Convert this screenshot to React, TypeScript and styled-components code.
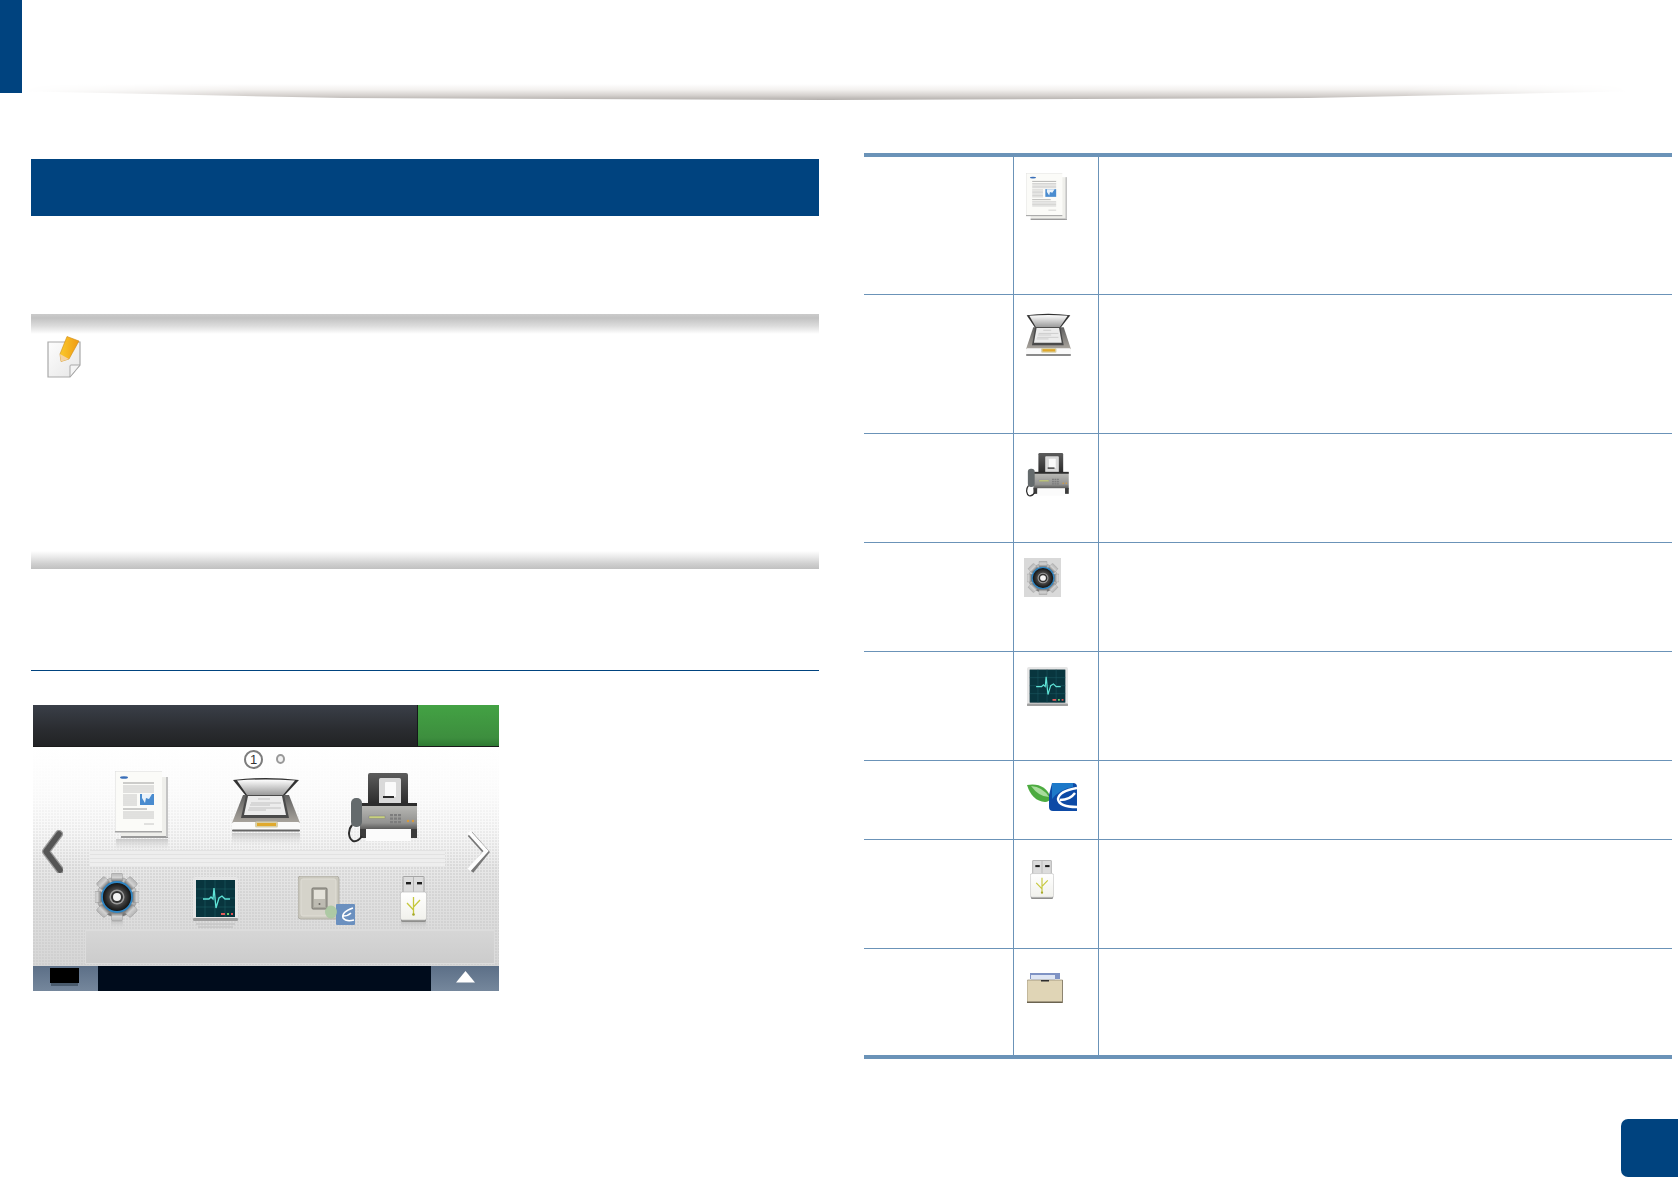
import React from "react";
import styled, { createGlobalStyle } from "styled-components";

const GlobalStyle = createGlobalStyle`
  html, body { margin: 0; padding: 0; background: #fff; }
  body { font-family: "Liberation Sans", Arial, sans-serif; overflow: hidden; }
`;

const BLUE = "#00437f";
const RULE = "#6b93b8";

const Page = styled.div`
  width: 1678px;
  height: 1178px;
  display: flex;
  flex-direction: column;
  background: #fff;
`;
const Header = styled.header`
  height: 100px;
  display: flex;
  flex: none;
`;
const HeaderTab = styled.div`
  width: 22px;
  height: 93px;
  background: ${BLUE};
`;
const HeaderShadow = styled.div`
  width: 1608px;
  height: 16px;
  margin-top: 84px;
  background: linear-gradient(to bottom, #ffffff 0%, #f3f1ef 35%, #d6d2cf 70%, #b3afac 100%);
  clip-path: polygon(0 45%, 20% 88%, 50% 100%, 80% 88%, 100% 45%, 100% 0, 0 0);
  mask-image: linear-gradient(to right, transparent 0, #000 14%, #000 86%, transparent 100%);
`;
const Main = styled.main`
  flex: 1;
  display: grid;
  grid-template-columns: 788px 808px;
  column-gap: 45px;
  align-items: start;
  padding-left: 31px;
  margin-top: 53px;
`;
const LeftColumn = styled.section`
  padding-top: 6px;
  display: flex;
  flex-direction: column;
`;
const SectionBar = styled.div`
  height: 57px;
  background: ${BLUE};
`;
const NoteBox = styled.div`
  margin-top: 98px;
  height: 255px;
  display: flex;
  flex-direction: column;
  justify-content: space-between;
`;
const NoteTop = styled.div`
  height: 20px;
  background: linear-gradient(to bottom, #cbcbcb 0%, #c2c2c2 20%, #dcdcdc 60%, #ffffff 100%);
`;
const NoteBody = styled.div`
  flex: 1;
  padding: 1px 0 0 16px;
`;
const NoteBottom = styled.div`
  height: 18px;
  background: linear-gradient(to bottom, #ffffff 0%, #ececec 30%, #d0d0d0 70%, #c0c0c0 100%);
`;
const BlueRule = styled.div`
  margin-top: 101px;
  height: 1px;
  background: ${BLUE};
`;
const Device = styled.div`
  margin: 34px 0 0 2px;
  width: 466px;
  height: 286px;
  display: flex;
  flex-direction: column;
`;
const TitleBar = styled.div`
  height: 42px;
  flex: none;
  display: flex;
  border-bottom: 1px solid #1a1a1a;
  box-sizing: border-box;
`;
const TitleDark = styled.div`
  width: 384px;
  background: linear-gradient(to bottom, #3a3f48 0%, #2a2c30 60%, #222325 100%);
  border-right: 1px solid #15181b;
`;
const TitleGreen = styled.div`
  flex: 1;
  background: linear-gradient(to bottom, #43a244 0%, #3d8e3e 80%, #2f7a33 100%);
`;
const ScreenBody = styled.div`
  position: relative;
  height: 219px;
  flex: none;
  background:
    linear-gradient(to bottom, #ffffff 0%, rgba(252, 252, 252, 0.9) 22%, rgba(250, 250, 250, 0) 55%),
    radial-gradient(circle at 1px 1px, #c8c8c8 0.5px, transparent 0.9px) 0 0 / 3px 3px,
    linear-gradient(to bottom, #ffffff 0%, #f4f4f4 35%, #e2e2e2 65%, #d6d6d6 100%);
`;
const PagerRow = styled.div`
  height: 21px;
  padding: 3px 0 0 211px;
  box-sizing: border-box;
  display: flex;
  align-items: center;
  gap: 13px;
`;
const PagerNumber = styled.div`
  width: 19px;
  height: 19px;
  box-sizing: border-box;
  border: 2px solid #7d7d7d;
  border-radius: 50%;
  background: #fff;
  color: #333;
  font-size: 13px;
  line-height: 15px;
  text-align: center;
`;
const PagerDot = styled.div`
  width: 9px;
  height: 10px;
  box-sizing: border-box;
  border: 2px solid #999;
  border-radius: 50%;
  background: #f2f2f2;
`;
const IconRow = styled.div<{ $h: number }>`
  height: ${(p) => p.$h}px;
  display: flex;
  align-items: flex-start;
`;
const IconSlot = styled.div<{ $top: number; $left: number; $soft?: boolean }>`
  flex: none;
  line-height: 0;
  margin: ${(p) => p.$top}px 0 0 ${(p) => p.$left}px;
  filter: ${(p) => (p.$soft ? "blur(0.7px)" : "blur(0.35px)")};
`;
const Stripes = styled.div`
  height: 16px;
  width: 355px;
  margin-left: 57px;
  background: repeating-linear-gradient(to bottom, #e2e2e2 0, #e2e2e2 1px, #eeeeee 1px, #eeeeee 4px);
`;
const LowerPanel = styled.div`
  height: 34px;
  margin: 0 4px 1px 52px;
  background: linear-gradient(to bottom, #d6d6d6, #cccccc);
  border: 1px solid #dcdcdc;
  box-sizing: border-box;
`;
const Arrow = styled.div<{ $side: "left" | "right" }>`
  position: absolute;
  top: 83px;
  line-height: 0;
  ${(p) => (p.$side === "left" ? "left: 7px;" : "right: 9px;")}
`;
const ScreenFooter = styled.div`
  flex: 1;
  display: flex;
`;
const FooterLeft = styled.div`
  width: 65px;
  padding: 2px 0 0 17px;
  box-sizing: border-box;
  background: linear-gradient(to bottom, #5c6f87, #75879c);
`;
const FooterSwatch = styled.div`
  width: 29px;
  height: 15px;
  background: #000;
  box-shadow: 0 4px 0 -1px #4a5b6d;
`;
const FooterMiddle = styled.div`
  flex: 1;
  background: #000c1c;
`;
const FooterRight = styled.div`
  width: 68px;
  display: flex;
  justify-content: center;
  padding-top: 5px;
  box-sizing: border-box;
  background: linear-gradient(to bottom, #5c6f87, #75879c);
`;
const Table = styled.div`
  border-top: 4px solid ${RULE};
  border-bottom: 4px solid ${RULE};
`;
const TableRow = styled.div<{ $h: number; $last?: boolean }>`
  display: grid;
  grid-template-columns: 149px 86px 1fr;
  height: ${(p) => p.$h}px;
  box-sizing: border-box;
  border-bottom: ${(p) => (p.$last ? "none" : `1px solid ${RULE}`)};
`;
const LabelCell = styled.div``;
const IconCell = styled.div`
  border-left: 1px solid ${RULE};
  border-right: 1px solid ${RULE};
`;
const DescCell = styled.div``;
const GearBox = styled.div`
  width: 37px;
  height: 39px;
  background: #d9d9d9;
  display: flex;
  align-items: center;
  justify-content: center;
`;
const PageFooter = styled.footer`
  flex: none;
  display: flex;
  justify-content: flex-end;
  margin-bottom: 1px;
`;
const PageBadge = styled.div`
  width: 57px;
  height: 58px;
  background: ${BLUE};
  border-radius: 7px 0 0 7px;
`;

type IconProps = { w: number; h: number; reflect?: boolean };

const Fade = ({ id }: { id: string }) => (
  <linearGradient id={id} x1="0" y1="0" x2="0" y2="1">
    <stop offset="0" stopColor="#bdbdbd" stopOpacity="0.75" />
    <stop offset="1" stopColor="#dcdcdc" stopOpacity="0" />
  </linearGradient>
);

const DocIcon = ({ w, h, reflect }: IconProps) => (
  <svg width={w} height={h} viewBox={`0 0 53 ${reflect ? 79 : 67}`} preserveAspectRatio="none">
    <defs>
      <Fade id="docFade" />
    </defs>
    {reflect && <rect x="1" y="68" width="52" height="11" fill="url(#docFade)" />}
    <rect x="6" y="6" width="47" height="61" fill="#efefeb" />
    <rect x="6" y="65" width="47" height="2" fill="#9a9a9a" />
    <rect x="51" y="6" width="2" height="60" fill="#c4c4c4" />
    <rect x="0" y="0" width="47" height="61" fill="#fbfbf8" />
    <path d="M0 61V0h47" fill="none" stroke="#dcdcdc" />
    <rect x="0" y="60" width="47" height="1.5" fill="#a5a5a5" />
    <ellipse cx="9" cy="6.5" rx="4" ry="1.3" fill="#3a6fb8" />
    <g stroke="#777" strokeWidth="0.7">
      <path d="M8 12h31M8 38h24" />
    </g>
    <g stroke="#c0c0c0" strokeWidth="0.9">
      <path d="M8 15h31M8 17h31M8 19h31M8 21h31" />
      <path d="M8 24h14M8 26h14M8 28h14M8 30h14M8 32h14M8 34h14" />
      <path d="M8 41h31M8 43h31M8 45h31M8 47h31" />
      <path d="M29 53h10" />
    </g>
    <rect x="25" y="23" width="14" height="11" fill="#4a8ccf" />
    <path d="M27 23h10l-3 5-3-1-1 5-3-5z" fill="#e9f2fa" />
  </svg>
);

const ScannerIcon = ({ w, h, reflect }: IconProps) => (
  <svg width={w} height={h} viewBox={`0 0 68 ${reflect ? 68 : 56}`} preserveAspectRatio="none">
    <defs>
      <Fade id="scanFade" />
      <linearGradient id="lidFill" x1="0" y1="0" x2="0" y2="1">
        <stop offset="0" stopColor="#ffffff" />
        <stop offset="1" stopColor="#9a9a9a" />
      </linearGradient>
      <linearGradient id="scanBody" x1="0" y1="0" x2="0" y2="1">
        <stop offset="0" stopColor="#5f5f5f" />
        <stop offset="1" stopColor="#aaa59e" />
      </linearGradient>
    </defs>
    {reflect && <rect x="0" y="56" width="68" height="12" fill="url(#scanFade)" />}
    <path d="M1 3Q33-1 67 3L52 19H14z" fill="#333" />
    <path d="M5 3.5Q33 1.5 63 3.5L51 18H15z" fill="url(#lidFill)" />
    <path d="M11 18H57L68 46H0z" fill="url(#scanBody)" />
    <path d="M14 18H52L57 41H9z" fill="#4a4a4a" />
    <path d="M16 19H50L54 38H12z" fill="#ececec" />
    <g stroke="#a8a8a8" strokeWidth="0.6">
      <path d="M26 22h12M19 26h30M18 28h20M17 31h32M16 33h18" />
    </g>
    <rect x="0" y="45" width="68" height="9" rx="2" fill="#fafafa" />
    <rect x="0" y="52.5" width="68" height="2" rx="1" fill="#666" />
    <rect x="23" y="44.5" width="23" height="6" rx="1.5" fill="#d8cfa8" />
    <rect x="25" y="46" width="19" height="3" fill="#e0a92c" />
  </svg>
);

const FaxIcon = ({ w, h }: IconProps) => (
  <svg width={w} height={h} viewBox="0 0 71 70" preserveAspectRatio="none">
    <defs>
      <linearGradient id="faxBack" x1="0" y1="0" x2="0" y2="1">
        <stop offset="0" stopColor="#5c5c5c" />
        <stop offset="1" stopColor="#2a2a2a" />
      </linearGradient>
      <linearGradient id="faxBody" x1="0" y1="0" x2="0" y2="1">
        <stop offset="0" stopColor="#bcbcb8" />
        <stop offset="0.7" stopColor="#929290" />
        <stop offset="1" stopColor="#4a4a4a" />
      </linearGradient>
    </defs>
    <path d="M20 2q0-2 2-2h36q2 0 2 2v30H20z" fill="url(#faxBack)" />
    <rect x="31" y="5" width="22" height="27" rx="1.5" fill="#d9d9d9" />
    <rect x="37" y="9" width="11" height="15" rx="1" fill="#fafafa" />
    <rect x="35" y="23" width="11" height="2" fill="#2b2b2b" />
    <rect x="12" y="31" width="57" height="27" rx="1" fill="url(#faxBody)" />
    <rect x="12" y="30" width="57" height="3" fill="#2d2d2d" />
    <rect x="21" y="43" width="16" height="2.5" fill="#c9d17e" stroke="#777" strokeWidth="0.4" />
    <g fill="#7d7d7d">
      <rect x="42" y="41" width="3" height="2.2" />
      <rect x="46" y="41" width="3" height="2.2" />
      <rect x="50" y="41" width="3" height="2.2" />
      <rect x="42" y="44.5" width="3" height="2.2" />
      <rect x="46" y="44.5" width="3" height="2.2" />
      <rect x="50" y="44.5" width="3" height="2.2" />
      <rect x="42" y="48" width="3" height="2.2" />
      <rect x="46" y="48" width="3" height="2.2" />
      <rect x="50" y="48" width="3" height="2.2" />
    </g>
    <circle cx="60" cy="48" r="1.2" fill="#d89a3a" />
    <circle cx="65" cy="48" r="1.2" fill="#d89a3a" />
    <rect x="18" y="56" width="45" height="12" fill="#fbfbfb" />
    <rect x="12" y="56" width="6" height="9" fill="#3c3c3c" />
    <rect x="63" y="56" width="6" height="9" fill="#3c3c3c" />
    <rect x="3" y="25" width="11" height="29" rx="5" fill="#646a6c" />
    <path d="M4 52C-1 58 1 66 5 68c4 1 7-2 9-5" fill="none" stroke="#2d2d2d" strokeWidth="2" />
  </svg>
);

const GEAR_TEETH = [0, 45, 90, 135, 180, 225, 270, 315];

const GearIcon = ({ w, h, reflect }: IconProps) => (
  <svg width={w} height={h} viewBox={`0 0 44 ${reflect ? 57 : 48}`} preserveAspectRatio="none">
    <defs>
      <linearGradient id="gearMetal" x1="0" y1="0" x2="0" y2="1">
        <stop offset="0" stopColor="#b5b5b5" />
        <stop offset="0.5" stopColor="#d2d2d2" />
        <stop offset="1" stopColor="#6a6a6a" />
      </linearGradient>
      <radialGradient id="gearCore" cx="0.5" cy="0.5" r="0.5">
        <stop offset="0.35" stopColor="#5a5a5a" />
        <stop offset="1" stopColor="#0c0c0c" />
      </radialGradient>
      <Fade id="gearFade" />
    </defs>
    {reflect && <rect x="16" y="48" width="12" height="9" fill="url(#gearFade)" />}
    <circle cx="22" cy="24" r="20" fill="url(#gearMetal)" stroke="#8a8a8a" strokeWidth="0.5" />
    <g fill="url(#gearMetal)" stroke="#8a8a8a" strokeWidth="0.4">
      {GEAR_TEETH.map((a) => (
        <rect key={a} x="16.5" y="0" width="11" height="9" rx="1.5" transform={`rotate(${a} 22 24)`} />
      ))}
    </g>
    <circle cx="22" cy="24" r="15" fill="url(#gearCore)" stroke="#2f86c4" strokeWidth="1.8" />
    <circle cx="22" cy="24" r="7.5" fill="#9a9a9a" />
    <circle cx="22" cy="24" r="6" fill="#333" />
    <circle cx="22" cy="24" r="4" fill="#f4f4f4" />
  </svg>
);

const MonitorIcon = ({ w, h, reflect }: IconProps) => (
  <svg width={w} height={h} viewBox={`0 0 45 ${reflect ? 53 : 45}`} preserveAspectRatio="none">
    {reflect && (
      <g stroke="#bbb" strokeWidth="1">
        <path d="M3 47h39M5 50h35" />
      </g>
    )}
    <rect x="0" y="0" width="45" height="44" rx="2" fill="#e6e6e6" />
    <rect x="0" y="41" width="45" height="3" rx="1" fill="#a0a0a0" />
    <rect x="3" y="3" width="39" height="37" fill="#04202a" />
    <rect x="3" y="3" width="39" height="37" fill="#0b4a52" opacity="0.5" />
    <g stroke="#1c5a63" strokeWidth="0.6">
      <path d="M3 12h39M3 21h39M3 30h39M12 3v37M22 3v37M32 3v37" />
    </g>
    <path d="M10 22h6l2-2 2 2 1-11 2 20 3-10 3-2 3 3h5" fill="none" stroke="#5fe3d6" strokeWidth="1.3" />
    <rect x="28" y="36" width="4" height="2" fill="#e05a5a" />
    <rect x="34" y="36" width="2" height="2" fill="#6ecb6e" />
    <rect x="38" y="36" width="2" height="2" fill="#e05050" />
  </svg>
);

const SwitchIcon = ({ w, h }: IconProps) => (
  <svg width={w} height={h} viewBox="0 0 57 49" preserveAspectRatio="none">
    <rect x="0" y="0" width="41" height="43" rx="3" fill="#c9c7bd" stroke="#b0aea5" />
    <rect x="3" y="3" width="35" height="37" rx="2" fill="#d5d3ca" stroke="#e0ded6" />
    <rect x="14" y="12" width="15" height="21" rx="1" fill="#a8a69d" stroke="#77756e" />
    <rect x="16" y="14" width="11" height="9" fill="#e4e2da" />
    <rect x="16" y="23" width="11" height="8" fill="#bdbbb2" />
    <circle cx="21.5" cy="28" r="1" fill="#6c6a64" />
    <rect x="38" y="28" width="19" height="21" rx="1" fill="#6b90bf" />
    <path d="M55 32Q43 36 45 42q3 4 11 2M45 40q5 0 8-3" fill="none" stroke="#fff" strokeWidth="1.5" />
    <ellipse cx="33" cy="36" rx="6" ry="6.5" fill="#a9c8a0" opacity="0.9" />
  </svg>
);

const EcoIcon = ({ w, h }: IconProps) => (
  <svg width={w} height={h} viewBox="0 0 50 28" preserveAspectRatio="none">
    <path d="M0 2Q18-1 24 15q-2 4-6 4Q5 18 0 2z" fill="#4cab3f" />
    <path d="M4 3Q16 4 22 14Q12 14 4 3z" fill="#a8dc9c" />
    <path d="M25 0h21q4 0 4 4v24H26q-4 0-4-4V12z" fill="#0d4aa6" />
    <path d="M25 0h21v4Q33 6 25 16z" fill="#1d79c9" />
    <path d="M50 5Q32 8 31 16q1 8 19 8M33 17q10 0 15-7" fill="none" stroke="#fff" strokeWidth="2.4" />
  </svg>
);

const UsbIcon = ({ w, h, reflect }: IconProps) => (
  <svg width={w} height={h} viewBox={`0 0 27 ${reflect ? 54 : 46}`} preserveAspectRatio="none">
    <defs>
      <Fade id="usbFade" />
      <linearGradient id="usbBody" x1="0" y1="0" x2="0" y2="1">
        <stop offset="0" stopColor="#ffffff" />
        <stop offset="1" stopColor="#f1f1ec" />
      </linearGradient>
    </defs>
    {reflect && <rect x="1" y="46" width="25" height="8" fill="url(#usbFade)" />}
    <rect x="3" y="0.5" width="21" height="17" rx="0.5" fill="#dcdcdc" stroke="#8f8f8f" strokeWidth="0.7" />
    <rect x="13" y="1" width="1" height="16" fill="#b5b5b5" />
    <rect x="6" y="6" width="5" height="2.4" fill="#1d1d1d" />
    <rect x="17" y="6" width="5" height="2.4" fill="#1d1d1d" />
    <rect x="1" y="42" width="25" height="4" rx="1.5" fill="#8f8f8d" />
    <rect x="0.4" y="16" width="26.2" height="28" rx="2" fill="url(#usbBody)" stroke="#bdbdbd" strokeWidth="0.7" />
    <path d="M13.5 21v18M13.5 34L7 27M13.5 31L20 24" fill="none" stroke="#c6c83d" strokeWidth="1.3" />
    <circle cx="13.5" cy="38.5" r="1.3" fill="#a6a82a" />
  </svg>
);

const FolderIcon = ({ w, h }: IconProps) => (
  <svg width={w} height={h} viewBox="0 0 36 30" preserveAspectRatio="none">
    <rect x="3" y="0" width="30" height="6" fill="#7f93c4" />
    <rect x="4" y="2" width="24" height="5" fill="#dfe6f4" />
    <rect x="0" y="7" width="36" height="23" rx="1" fill="#e0d5b6" stroke="#7f7660" strokeWidth="0.6" />
    <rect x="0" y="28.5" width="36" height="1.5" fill="#6b6350" />
    <rect x="35" y="7" width="1" height="23" fill="#8d8470" />
    <rect x="14" y="7" width="8" height="1.5" fill="#2d2d2d" />
  </svg>
);

const PencilIcon = () => (
  <svg width="40" height="43" viewBox="0 0 40 43">
    <defs>
      <linearGradient id="noteFill" x1="0" y1="0" x2="1" y2="1">
        <stop offset="0" stopColor="#fdfdfd" />
        <stop offset="1" stopColor="#e6e6e6" />
      </linearGradient>
      <linearGradient id="pencilFill" x1="0" y1="0" x2="1" y2="0">
        <stop offset="0" stopColor="#fbc92b" />
        <stop offset="1" stopColor="#ef9a12" />
      </linearGradient>
    </defs>
    <path d="M1 7H33V30L23 42H1z" fill="url(#noteFill)" stroke="#a9a9a9" strokeWidth="1.2" />
    <path d="M23 42V31q0-1 1-1H33z" fill="#f4f4f4" stroke="#a9a9a9" />
    <path d="M20 1.5L32 6 22 24 14 26.5 13 19z" fill="url(#pencilFill)" stroke="#cf8a14" strokeWidth="0.6" />
    <path d="M13 19L22 24 14 26.5z" fill="#f4d3a4" />
  </svg>
);

const LeftArrow = () => (
  <svg width="23" height="43" viewBox="0 0 23 43">
    <path d="M19 4L6 21.5 20 40" fill="none" stroke="#9a9a9a" strokeWidth="8" strokeLinecap="round" strokeLinejoin="round" />
    <path d="M19 4L6 21.5 20 40" fill="none" stroke="#555" strokeWidth="5.5" strokeLinecap="round" strokeLinejoin="round" />
  </svg>
);
const RightArrow = () => (
  <svg width="23" height="43" viewBox="0 0 23 43">
    <path d="M3 4l16 18L4 41" fill="none" stroke="#777" strokeWidth="6" />
    <path d="M2 2l17 19L2 40" fill="none" stroke="#fdfdfd" strokeWidth="4" />
  </svg>
);
const UpTriangle = () => (
  <svg width="19" height="12" viewBox="0 0 19 12">
    <path d="M9.5 0L19 11.5H0z" fill="#fff" />
  </svg>
);

const rows: { h: number; top: number; left: number; icon: React.ReactNode }[] = [
  { h: 138, top: 16, left: 12, icon: <DocIcon w={41} h={47} /> },
  { h: 139, top: 18, left: 12, icon: <ScannerIcon w={45} h={44} /> },
  { h: 109, top: 19, left: 12, icon: <FaxIcon w={44} h={44} /> },
  {
    h: 109,
    top: 15,
    left: 10,
    icon: (
      <GearBox>
        <GearIcon w={32} h={34} />
      </GearBox>
    ),
  },
  { h: 109, top: 15, left: 13, icon: <MonitorIcon w={41} h={40} /> },
  { h: 79, top: 22, left: 13, icon: <EcoIcon w={50} h={28} /> },
  { h: 109, top: 20, left: 16, icon: <UsbIcon w={24} h={39} /> },
  { h: 106, top: 24, left: 13, icon: <FolderIcon w={36} h={30} /> },
];

export default function App() {
  return (
    <Page>
      <GlobalStyle />
      <Header>
        <HeaderTab />
        <HeaderShadow />
      </Header>
      <Main>
        <LeftColumn>
          <SectionBar />
          <NoteBox>
            <NoteTop />
            <NoteBody>
              <PencilIcon />
            </NoteBody>
            <NoteBottom />
          </NoteBox>
          <BlueRule />
          <Device>
            <TitleBar>
              <TitleDark />
              <TitleGreen />
            </TitleBar>
            <ScreenBody>
              <PagerRow>
                <PagerNumber>1</PagerNumber>
                <PagerDot />
              </PagerRow>
              <IconRow $h={82}>
                <IconSlot $top={3} $left={82}>
                  <DocIcon w={53} h={79} reflect />
                </IconSlot>
                <IconSlot $top={9} $left={64}>
                  <ScannerIcon w={68} h={68} reflect />
                </IconSlot>
                <IconSlot $top={5} $left={48}>
                  <FaxIcon w={71} h={70} />
                </IconSlot>
              </IconRow>
              <Stripes />
              <IconRow $h={64}>
                <IconSlot $top={7} $left={62}>
                  <GearIcon w={44} h={57} reflect />
                </IconSlot>
                <IconSlot $top={11} $left={54}>
                  <MonitorIcon w={45} h={53} reflect />
                </IconSlot>
                <IconSlot $top={10} $left={60}>
                  <SwitchIcon w={57} h={49} />
                </IconSlot>
                <IconSlot $top={10} $left={45}>
                  <UsbIcon w={27} h={54} reflect />
                </IconSlot>
              </IconRow>
              <LowerPanel />
              <Arrow $side="left">
                <LeftArrow />
              </Arrow>
              <Arrow $side="right">
                <RightArrow />
              </Arrow>
            </ScreenBody>
            <ScreenFooter>
              <FooterLeft>
                <FooterSwatch />
              </FooterLeft>
              <FooterMiddle />
              <FooterRight>
                <UpTriangle />
              </FooterRight>
            </ScreenFooter>
          </Device>
        </LeftColumn>
        <Table>
          {rows.map((r, i) => (
            <TableRow key={i} $h={r.h} $last={i === rows.length - 1}>
              <LabelCell />
              <IconCell>
                <IconSlot $top={r.top} $left={r.left} $soft>
                  {r.icon}
                </IconSlot>
              </IconCell>
              <DescCell />
            </TableRow>
          ))}
        </Table>
      </Main>
      <PageFooter>
        <PageBadge />
      </PageFooter>
    </Page>
  );
}
